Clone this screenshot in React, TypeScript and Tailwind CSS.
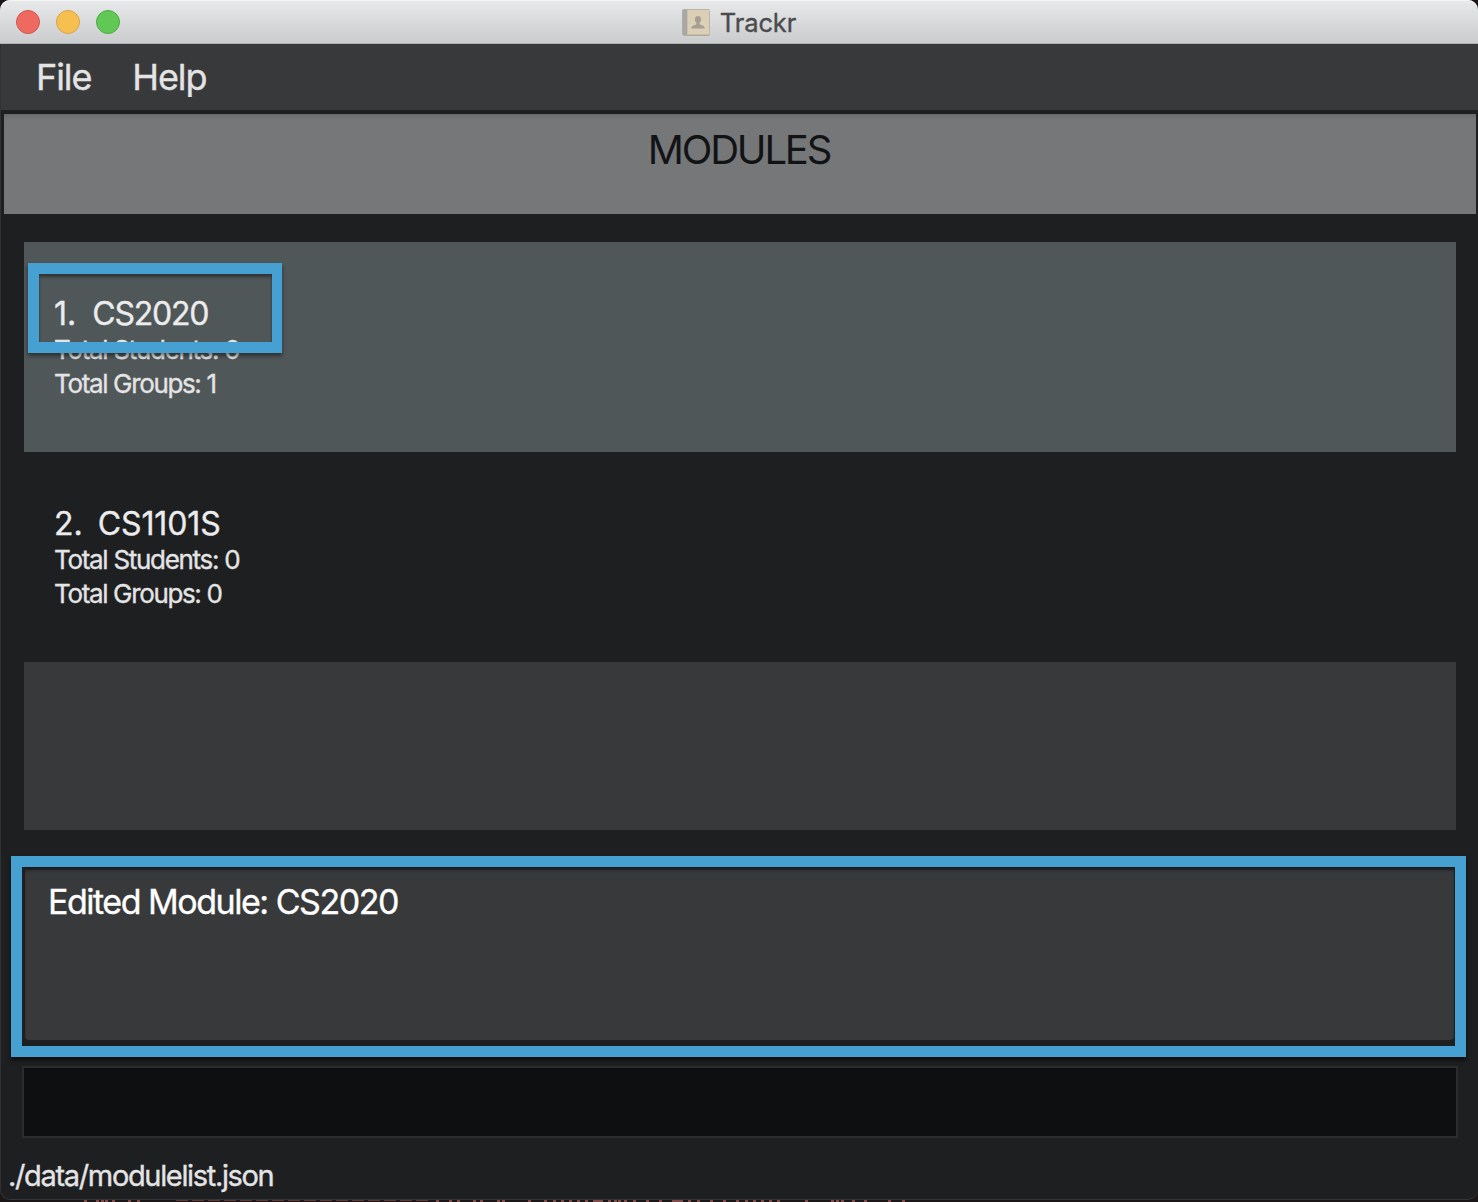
import React from "react";

type Module = {
  index: number;
  code: string;
  students: number;
  groups: number;
  gapClass: string;
  codeClass: string;
};

const modules: Module[] = [
  { index: 1, code: "CS2020", students: 0, groups: 1, gapClass: "gap-[16px]", codeClass: "tracking-[-1.2px]" },
  { index: 2, code: "CS1101S", students: 0, groups: 0, gapClass: "gap-[15px]", codeClass: "tracking-[-0.1px]" },
];

// Horizontal positions of the console marks peeking out below the window.
const consoleMarks = [
  84, 96, 101, 105, 112, 128, 137, 436, 449, 457, 473, 480, 497, 502, 528, 544, 553, 561, 569, 577, 585, 608, 614, 618, 624,
  633, 646, 659, 688, 697, 710, 723, 736, 745, 753, 761, 769, 777, 805, 831, 836, 841, 852, 864, 888, 902,
];

function AddressBookIcon() {
  return (
    <svg width="29" height="28" viewBox="0 0 29 28" className="shrink-0">
      <rect x="0.5" y="0.5" width="27" height="25.5" rx="1" fill="#dbcfb5" stroke="#bbb3a4" />
      <rect x="0.5" y="0.5" width="4.5" height="25.5" rx="1" fill="#aaa8a4" />
      <path d="M5.5 1v25" stroke="#c8c0b0" />
      <path d="M2 26.3h25.5" stroke="#aaa397" />
      <path
        d="M16 7c-2 0-3.1 1.4-3.1 3.3 0 1.6.6 2.7 1.5 3.4v1.5c-1.2 1-5.2 1-5.2 4.3h13.6c0-3.3-4-3.3-5.2-4.3v-1.5c.9-.7 1.5-1.8 1.5-3.4C19.1 8.400 18 7 16 7z"
        fill="#a59e93"
      />
    </svg>
  );
}

function TitleBar() {
  return (
    <header className="relative -ml-px flex h-11 shrink-0 items-center justify-center rounded-t-[10px] border-b border-[#b0b1b3] bg-linear-to-b from-[#e8e9ea] to-[#cbccce] shadow-[inset_0_1px_0_#f6f6f6]">
      <div className="absolute top-[10px] left-4 flex gap-4">
        <span className="size-6 rounded-full border border-[#d3564e] bg-[#ee6a60]" />
        <span className="size-6 rounded-full border border-[#d9a443] bg-[#f5c04f]" />
        <span className="size-6 rounded-full border border-[#4aad42] bg-[#61c755]" />
      </div>
      <div className="flex items-center gap-[9px] pt-[2px]">
        <AddressBookIcon />
        <span className="text-[25.5px] leading-8 tracking-[-0.1px] text-[#4b4b4d]">Trackr</span>
      </div>
    </header>
  );
}

function ModuleRow({ module, selected }: { module: Module; selected: boolean }) {
  return (
    <li className={`relative flex h-[210px] flex-col pt-[52px] pl-[30px] ${selected ? "bg-[#505759]" : "bg-[#1e1f21]"}`}>
      <div className={`flex h-[39px] items-center pt-px text-[32px] text-[#ececed] ${module.gapClass}`}>
        <span>{module.index}.</span>
        <span className={module.codeClass}>{module.code}</span>
      </div>
      <p className="h-[34px] text-[26px] leading-[34px] tracking-[-1.3px]">Total Students: {module.students}</p>
      <p className="h-[34px] text-[26px] leading-[34px] tracking-[-1.35px]">Total Groups: {module.groups}</p>
      {selected && (
        <div className="absolute top-[21px] left-1 h-[90px] w-[254px] border-[11px] border-r-[10px] border-[#47a0d2] shadow-[0_3px_4px_rgba(0,0,0,0.45),inset_0_3px_3px_rgba(0,0,0,0.4)]" />
      )}
    </li>
  );
}

export default function App() {
  return (
    <div className="relative h-[1202px] w-[1478px] overflow-hidden bg-[#1b1718] font-['Inter',sans-serif] text-[#e4e4e5] [-webkit-text-stroke:0.35px]">
      <svg className="absolute bottom-0 left-0" width="1478" height="2" viewBox="0 0 1478 2">
        {consoleMarks.map((x) => (
          <rect key={x} x={x} y="0" width="3" height="2" fill="#814b4c" />
        ))}
        <rect x="593" y="0" width="10" height="2" fill="#814b4c" />
        <rect x="672" y="0" width="11" height="2" fill="#814b4c" />
        <path d="M176 .5h254" stroke="#60383a" strokeDasharray="12 4" />
      </svg>
      <div className="relative flex h-[1200px] flex-col rounded-t-[10px] rounded-b-[10px] border-b border-l border-b-[#343537] border-l-[#303133] bg-[#1e1f21]">
        <TitleBar />
        <nav className="flex h-[66px] shrink-0 items-center gap-[41px] bg-[#38393b] pl-[35px] text-[36px] tracking-[-1.1px]">
          <span>File</span>
          <span>Help</span>
        </nav>
        <section className="mt-1 mr-[2px] ml-[3px] flex h-[100px] shrink-0 justify-center bg-[#767779] pt-3 pr-[2px] shadow-[inset_0_5px_5px_-3px_rgba(0,0,0,0.14)]">
          <h1 className="text-[40px] leading-[48px] tracking-[-2.2px] text-[#121315] [-webkit-text-stroke:0px]">MODULES</h1>
        </section>
        <ul className="mt-7 mr-[22px] ml-[23px] shrink-0">
          {modules.map((m) => (
            <ModuleRow key={m.code} module={m} selected={m.index === 1} />
          ))}
          <li className="h-[168px] bg-[#38393b]" />
        </ul>
        <section className="mt-[26px] mr-[12px] ml-[10px] flex h-[201px] shrink-0 flex-col border-[11px] border-[#47a0d2] shadow-[0_3px_4px_rgba(0,0,0,0.6)]">
          <div className="mr-px ml-[3px] h-[173px] rounded-b-[4px] bg-[#38393b] pt-[14px] pl-[23px] shadow-[inset_0_4px_3px_-1px_rgba(0,0,0,0.55)]">
            <p className="text-[34px] leading-[42px] tracking-[-1.48px] text-white">Edited Module: CS2020</p>
          </div>
        </section>
        <div className="mt-[9px] mr-[20px] ml-[21px] h-[72px] shrink-0 border-2 border-[#2b2c2e] bg-[#0e0f11]" />
        <footer className="flex h-[61px] items-center pt-[14px] pl-[7px] text-[29px] tracking-[-1.34px]">./data/modulelist.json</footer>
      </div>
    </div>
  );
}
